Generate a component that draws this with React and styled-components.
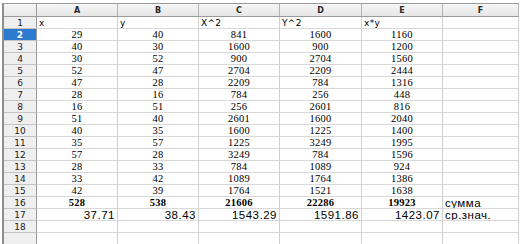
import styled, { createGlobalStyle } from 'styled-components';

// Regression worksheet: x, y, squares, products, sums and means

const COLS = ['A', 'B', 'C', 'D', 'E', 'F'];

const X = [29, 40, 30, 52, 47, 28, 16, 51, 40, 35, 57, 28, 33, 42];
const Y = [40, 30, 52, 47, 28, 16, 51, 40, 35, 57, 28, 33, 42, 39];
const X2 = [841, 1600, 900, 2704, 2209, 784, 256, 2601, 1600, 1225, 3249, 784, 1089, 1764];
const Y2 = [1600, 900, 2704, 2209, 784, 256, 2601, 1600, 1225, 3249, 784, 1089, 1764, 1521];
const XY = [1160, 1200, 1560, 2444, 1316, 448, 816, 2040, 1400, 1995, 1596, 924, 1386, 1638];

const SUMS = ['528', '538', '21606', '22286', '19923'];
const MEANS = ['37.71', '38.43', '1543.29', '1591.86', '1423.07'];

const App = () => {
  return (
    <>
      <GlobalStyle />
      <Frame>
        <Sheet>
          <Corner />
          {COLS.map((c) => (
            <ColHead key={c}>{c}</ColHead>
          ))}

          <RowHead>1</RowHead>
          <Cell $kind="label">x</Cell>
          <Cell $kind="label">y</Cell>
          <Cell $kind="label">X^2</Cell>
          <Cell $kind="label">Y^2</Cell>
          <Cell $kind="label">x*y</Cell>
          <Cell />

          {X.map((x, i) => (
            <Row key={i}>
              <RowHead $selected={i === 0}>{i + 2}</RowHead>
              <Cell>{x}</Cell>
              <Cell>{Y[i]}</Cell>
              <Cell>{X2[i]}</Cell>
              <Cell>{Y2[i]}</Cell>
              <Cell>{XY[i]}</Cell>
              <Cell />
            </Row>
          ))}

          <RowHead>16</RowHead>
          {SUMS.map((s, i) => (
            <Cell key={i} $kind="sum">
              {s}
            </Cell>
          ))}
          <Cell $kind="note">сумма</Cell>

          <RowHead>17</RowHead>
          {MEANS.map((m, i) => (
            <Cell key={i} $kind="mean">
              {m}
            </Cell>
          ))}
          <Cell $kind="note">ср.знач.</Cell>

          <RowHead>18</RowHead>
          {COLS.map((c) => (
            <Cell key={c} />
          ))}

          <RowHead />
          {COLS.map((c) => (
            <Cell key={c} />
          ))}
        </Sheet>
      </Frame>
    </>
  );
};

export default App;

const Row = ({ children }) => <>{children}</>;

//===================
// Styled-Components
//===================

const GlobalStyle = createGlobalStyle`
  html, body {
    margin: 0;
    padding: 0;
    background: #fff;
    overflow: hidden;
  }
  body {
    width: 529px;
    height: 244px;
  }
`;

const Frame = styled.div`
  margin: 3px 0 0 2px;
  width: 517px;
  height: 241px;
  overflow: hidden;
  border-left: 2px solid #8e8e8e;
`;

const Sheet = styled.div`
  display: grid;
  grid-template-columns: 33px 81px 81px 81px 82px 81px 76px;
  grid-template-rows: 14px repeat(19, 12px);
  width: 515px;

  & > * {
    box-sizing: border-box;
    overflow: hidden;
    white-space: nowrap;
  }
`;

const Corner = styled.div`
  background: linear-gradient(#f6f6f6, #e8e8e8);
  border-top: 1px solid #9a9a9a;
  border-right: 1px solid #9a9a9a;
  border-bottom: 1px solid #9a9a9a;
`;

const ColHead = styled.div`
  display: flex;
  align-items: center;
  justify-content: center;
  background: linear-gradient(#f6f6f6, #e6e6e6);
  border-top: 1px solid #9a9a9a;
  border-right: 1px solid #b4b4b4;
  border-bottom: 1px solid #9a9a9a;
  font-family: 'DejaVu Sans', Verdana, sans-serif;
  font-size: 8px;
  font-weight: bold;
  color: #2a2a2a;
`;

const RowHead = styled.div`
  display: flex;
  align-items: center;
  justify-content: center;
  background: ${(p) => (p.$selected ? '#2b7ad0' : '#efefef')};
  border-right: 1px solid #9a9a9a;
  border-bottom: 1px solid #c4c4c4;
  font-family: 'DejaVu Sans', Verdana, sans-serif;
  font-size: 9px;
  font-weight: ${(p) => (p.$selected ? 'bold' : 'normal')};
  color: ${(p) => (p.$selected ? '#fff' : '#222')};
`;

const Cell = styled.div`
  display: flex;
  align-items: center;
  padding: 0 2px;
  border-right: 1px solid #cfcfcf;
  border-bottom: 1px solid #d8d8d8;
  color: #000;
  line-height: 12px;

  justify-content: ${(p) =>
    p.$kind === 'label' || p.$kind === 'note'
      ? 'flex-start'
      : p.$kind === 'mean'
      ? 'flex-end'
      : 'center'};

  font-family: ${(p) =>
    p.$kind === 'label'
      ? "'DejaVu Sans', Verdana, sans-serif"
      : p.$kind === 'mean' || p.$kind === 'note'
      ? "'Liberation Sans', Arial, sans-serif"
      : "'Liberation Serif', 'Times New Roman', serif"};

  font-size: ${(p) =>
    p.$kind === 'label'
      ? '9px'
      : p.$kind === 'mean' || p.$kind === 'note'
      ? '11.5px'
      : '10.5px'};

  font-weight: ${(p) => (p.$kind === 'sum' ? 'bold' : 'normal')};
  letter-spacing: ${(p) =>
    p.$kind === 'mean' || p.$kind === 'note' ? '0.5px' : '0.3px'};
`;
